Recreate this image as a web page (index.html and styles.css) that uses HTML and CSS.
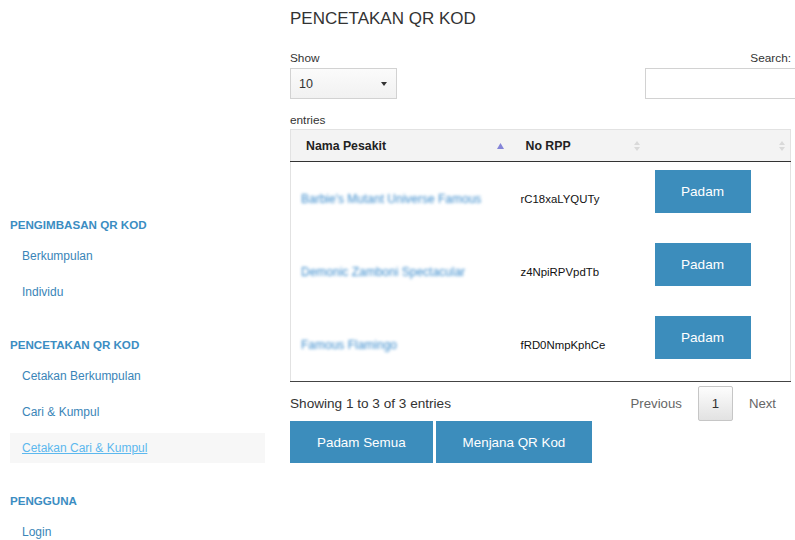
FILE: index.html
```html
<!DOCTYPE html>
<html lang="ms">
<head>
<meta charset="utf-8">
<title>Pencetakan QR Kod</title>
<link rel="stylesheet" href="styles.css">
</head>
<body>
<div class="page">
  <aside class="sidebar">
    <section class="nav-section">
      <h3 class="nav-heading">PENGIMBASAN QR KOD</h3>
      <ul class="nav-list">
        <li><a href="#">Berkumpulan</a></li>
        <li><a href="#">Individu</a></li>
      </ul>
    </section>
    <section class="nav-section">
      <h3 class="nav-heading">PENCETAKAN QR KOD</h3>
      <ul class="nav-list">
        <li><a href="#">Cetakan Berkumpulan</a></li>
        <li><a href="#">Cari &amp; Kumpul</a></li>
        <li><a href="#" class="active">Cetakan Cari &amp; Kumpul</a></li>
      </ul>
    </section>
    <section class="nav-section">
      <h3 class="nav-heading">PENGGUNA</h3>
      <ul class="nav-list">
        <li><a href="#">Login</a></li>
      </ul>
    </section>
  </aside>

  <main class="content">
    <h1 class="title">PENCETAKAN QR KOD</h1>

    <div class="dt-controls">
      <div class="dt-length">
        <span class="lbl">Show</span>
        <div class="select">
          <span>10</span>
          <svg class="caret" width="6" height="4" viewBox="0 0 6 4"><path d="M0 0h6L3 4z" fill="#333"/></svg>
        </div>
        <span class="lbl entries">entries</span>
      </div>
      <div class="dt-filter">
        <span class="lbl">Search:</span>
        <div class="search-input"></div>
      </div>
    </div>

    <table class="dt-table">
      <colgroup>
        <col class="c-name">
        <col class="c-rpp">
        <col class="c-act">
      </colgroup>
      <thead>
        <tr>
          <th>Nama Pesakit
            <svg class="sort" width="7" height="6" viewBox="0 0 7 6"><path d="M3.5 0L7 6H0z" fill="#8484d8"/></svg>
          </th>
          <th>No RPP
            <svg class="sort" width="6" height="10" viewBox="0 0 6 10"><path d="M3 0L6 4H0zM0 6h6L3 10z" fill="#d9d9d9"/></svg>
          </th>
          <th>
            <svg class="sort" width="6" height="10" viewBox="0 0 6 10"><path d="M3 0L6 4H0zM0 6h6L3 10z" fill="#d9d9d9"/></svg>
          </th>
        </tr>
      </thead>
      <tbody>
        <tr>
          <td><a class="name" href="#">Barbie's Mutant Universe Famous</a></td>
          <td>rC18xaLYQUTy</td>
          <td class="act"><button class="btn btn-row">Padam</button></td>
        </tr>
        <tr>
          <td><a class="name" href="#">Demonic Zamboni Spectacular</a></td>
          <td>z4NpiRPVpdTb</td>
          <td class="act"><button class="btn btn-row">Padam</button></td>
        </tr>
        <tr>
          <td><a class="name" href="#">Famous Flamingo</a></td>
          <td>fRD0NmpKphCe</td>
          <td class="act"><button class="btn btn-row">Padam</button></td>
        </tr>
      </tbody>
    </table>

    <div class="dt-footer">
      <div class="dt-info">Showing 1 to 3 of 3 entries</div>
      <div class="dt-paging">
        <span class="pg">Previous</span>
        <span class="pg-current">1</span>
        <span class="pg">Next</span>
      </div>
    </div>

    <div class="actions">
      <button class="btn btn-big">Padam Semua</button>
      <button class="btn btn-big">Menjana QR Kod</button>
    </div>
  </main>
</div>
</body>
</html>
```

FILE: styles.css
```css
* { box-sizing: border-box; }

html, body {
  margin: 0;
  padding: 0;
  background: #fff;
  overflow: hidden;
}

body {
  font-family: "Liberation Sans", Arial, Helvetica, sans-serif;
  color: #333;
  width: 795px;
  height: 540px;
}

.page {
  display: flex;
  align-items: flex-start;
}

/* ---------- sidebar ---------- */
.sidebar {
  width: 290px;
  flex: none;
  padding: 217px 25px 0 10px;
}

.nav-section + .nav-section { margin-top: 27px; }

.nav-heading {
  margin: 0 0 5px;
  font-size: 11.6px;
  line-height: 16px;
  font-weight: bold;
  color: #3b8dc2;
}

.nav-list {
  list-style: none;
  margin: 0;
  padding: 0;
}

.nav-list li { padding: 3px 0; }

.nav-list a {
  display: block;
  padding: 7px 12px;
  font-size: 12px;
  line-height: 16px;
  color: #3a85b8;
  text-decoration: none;
}

.nav-list a.active {
  background: #f7f7f7;
  color: #5cb8ee;
  text-decoration: underline;
}

/* ---------- main ---------- */
.content {
  width: 505px;
  flex: none;
}

.title {
  margin: 9px 0 0;
  font-size: 17px;
  line-height: 20px;
  font-weight: normal;
  color: #333;
}

.dt-controls {
  display: flex;
  justify-content: space-between;
  margin-top: 22px;
}

.lbl {
  display: block;
  font-size: 11.8px;
  line-height: 14px;
  color: #333;
}

.select {
  margin-top: 3px;
  width: 107px;
  height: 31px;
  border: 1px solid #d2d2d2;
  background: linear-gradient(#fbfbfb, #f1f1f1);
  display: flex;
  align-items: center;
  justify-content: space-between;
  padding: 0 9px 0 8px;
  font-size: 12.5px;
  color: #333;
}

.caret { display: block; }

.entries { margin-top: 14px; }

.dt-filter {
  display: flex;
  flex-direction: column;
  align-items: flex-end;
}

.dt-filter .lbl { padding-right: 4px; }

.search-input {
  margin-top: 3px;
  width: 152px;
  height: 31px;
  border: 1px solid #d2d2d2;
  background: #fff;
  margin-right: -2px;
}

/* ---------- table ---------- */
.dt-table {
  margin-top: 2px;
  width: 500px;
  border-collapse: collapse;
  table-layout: fixed;
  border-left: 1px solid #e2e2e2;
  border-right: 1px solid #e2e2e2;
  border-bottom: 1px solid #444;
}

.c-name { width: 220px; }
.c-rpp { width: 134px; }
.c-act { width: 146px; }

.dt-table th {
  position: relative;
  height: 32px;
  padding: 0 15px;
  text-align: left;
  font-size: 12.3px;
  font-weight: bold;
  color: #222;
  background: #f3f3f3;
  border-top: 1px solid #e2e2e2;
  border-bottom: 1px solid #333;
}

.sort {
  position: absolute;
  right: 5px;
  top: 50%;
  transform: translateY(-50%);
}

.dt-table thead th:first-child .sort { right: 7px; top: 13px; transform: none; }

.dt-table td {
  padding: 8px 10px;
  font-size: 11.4px;
  color: #111;
  vertical-align: middle;
}

.dt-table td.act { vertical-align: top; }

.name {
  font-size: 12px;
  color: #3a8bcc;
  text-decoration: none;
  filter: blur(1.4px);
  white-space: nowrap;
}

.btn {
  border: 0;
  background: #3c8dbc;
  color: #fff;
  font-family: "Liberation Sans", Arial, Helvetica, sans-serif;
  cursor: pointer;
  padding: 0 26px;
  border-radius: 0;
}

.btn-row {
  display: block;
  width: 96px;
  height: 43px;
  margin-bottom: 14px;
  font-size: 13.6px;
  padding: 0;
}

/* ---------- footer ---------- */
.dt-footer {
  display: flex;
  justify-content: space-between;
  align-items: center;
  width: 500px;
  margin-top: 4px;
  height: 35px;
}

.dt-info {
  font-size: 13.6px;
  color: #333;
}

.dt-paging {
  display: flex;
  align-items: center;
  gap: 16px;
  padding-right: 14px;
  font-size: 13.2px;
}

.pg { color: #666; }

.pg-current {
  width: 35px;
  height: 35px;
  display: flex;
  align-items: center;
  justify-content: center;
  border: 1px solid #c6c6c6;
  border-radius: 2px;
  background: linear-gradient(#fdfdfd, #e2e2e2);
  color: #333;
}

.actions {
  display: flex;
  gap: 3px;
}

.btn-big {
  height: 42px;
  font-size: 13.4px;
  padding: 0 27px;
}
```
